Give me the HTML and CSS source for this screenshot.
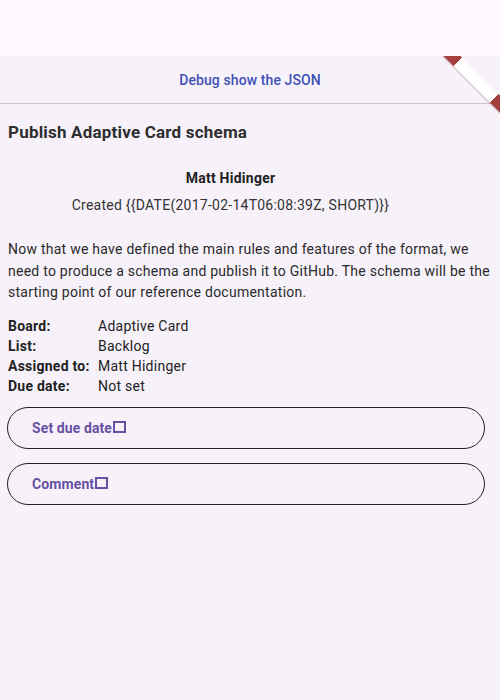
FILE: index.html
```html
<!DOCTYPE html>
<html>
<head>
<meta charset="utf-8">
<link rel="stylesheet" href="styles.css">
</head>
<body>
<div class="page">
  <div class="status"></div>
  <div class="appbar"><span class="link">Debug show the JSON</span></div>
  <div class="content">
    <div class="title">Publish Adaptive Card schema</div>
    <div class="author">
      <div class="name">Matt Hidinger</div>
      <div class="created">Created {{DATE(2017-02-14T06:08:39Z, SHORT)}}</div>
    </div>
    <p class="desc">Now that we have defined the main rules and features of the format, we need to produce a schema and publish it to GitHub. The schema will be the starting point of our reference documentation.</p>
    <div class="facts">
      <div class="fk">Board:</div><div class="fv">Adaptive Card</div>
      <div class="fk">List:</div><div class="fv">Backlog</div>
      <div class="fk">Assigned to:</div><div class="fv">Matt Hidinger</div>
      <div class="fk">Due date:</div><div class="fv">Not set</div>
    </div>
    <div class="actions">
      <div class="btn">Set due date<span class="tofu"></span></div>
      <div class="btn">Comment<span class="tofu"></span></div>
    </div>
  </div>
  <div class="banner-clip"><div class="banner"></div></div>
</div>
</body>
</html>
```
FILE: styles.css
```css
html, body {
  margin: 0;
  padding: 0;
}
body {
  width: 500px;
  height: 700px;
  background: #f7f2fa;
  font-family: Roboto, "Liberation Sans", sans-serif;
  color: #222;
  overflow: hidden;
}
.page {
  position: relative;
  width: 500px;
  height: 700px;
}
.status {
  height: 56px;
  background: #fef7ff;
}
.appbar {
  height: 47px;
  border-bottom: 1px solid #cac4d0;
  display: flex;
  align-items: center;
  justify-content: center;
}
.link {
  color: #3f51b5;
  font-size: 14px;
  font-weight: 500;
  letter-spacing: 0.1px;
}
.content {
  padding: 18px 8px 0 8px;
}
.title {
  font-size: 17px;
  font-weight: 700;
  line-height: 20px;
  letter-spacing: 0.2px;
  color: #2e2e2e;
}
.author {
  margin-top: 26px;
  padding-right: 39px;
  text-align: center;
  font-size: 14px;
  letter-spacing: 0.25px;
}
.name {
  font-weight: 700;
  line-height: 20px;
}
.created {
  margin-top: 7px;
  line-height: 20px;
  color: #333;
}
.desc {
  margin: 24px 0 0 0;
  font-size: 14px;
  line-height: 21.5px;
  letter-spacing: 0.25px;
  color: #2a2a2a;
}
.facts {
  margin-top: 12px;
  display: grid;
  grid-template-columns: 90px 1fr;
  font-size: 14px;
  line-height: 20px;
  letter-spacing: 0.25px;
}
.fk {
  font-weight: 700;
}
.actions {
  margin-top: 11px;
  margin-right: 7px;
  display: flex;
  flex-direction: column;
  gap: 14px;
}
.btn {
  height: 40px;
  border: 1px solid #222;
  border-radius: 21px;
  padding-left: 24px;
  display: flex;
  align-items: center;
  color: #6750a4;
  font-weight: 700;
  font-size: 14px;
  letter-spacing: 0.1px;
  margin-left: -1px;
}
.tofu {
  display: inline-block;
  width: 9px;
  height: 8px;
  border: 2px solid #6750a4;
  margin-left: 1px;
  position: relative;
  top: -1px;
}
.banner-clip {
  position: absolute;
  top: 56px;
  right: 0;
  width: 60px;
  height: 60px;
  overflow: hidden;
}
.banner {
  position: absolute;
  left: -10px;
  top: 21.5px;
  width: 100px;
  height: 12px;
  transform: rotate(45deg);
  background: linear-gradient(to right, #a33f3c 0 18.5px, #ffffff 18.5px 70px, #a33f3c 70px);
  box-shadow: 0 1px 1px rgba(160, 60, 60, 0.35);
}
```
